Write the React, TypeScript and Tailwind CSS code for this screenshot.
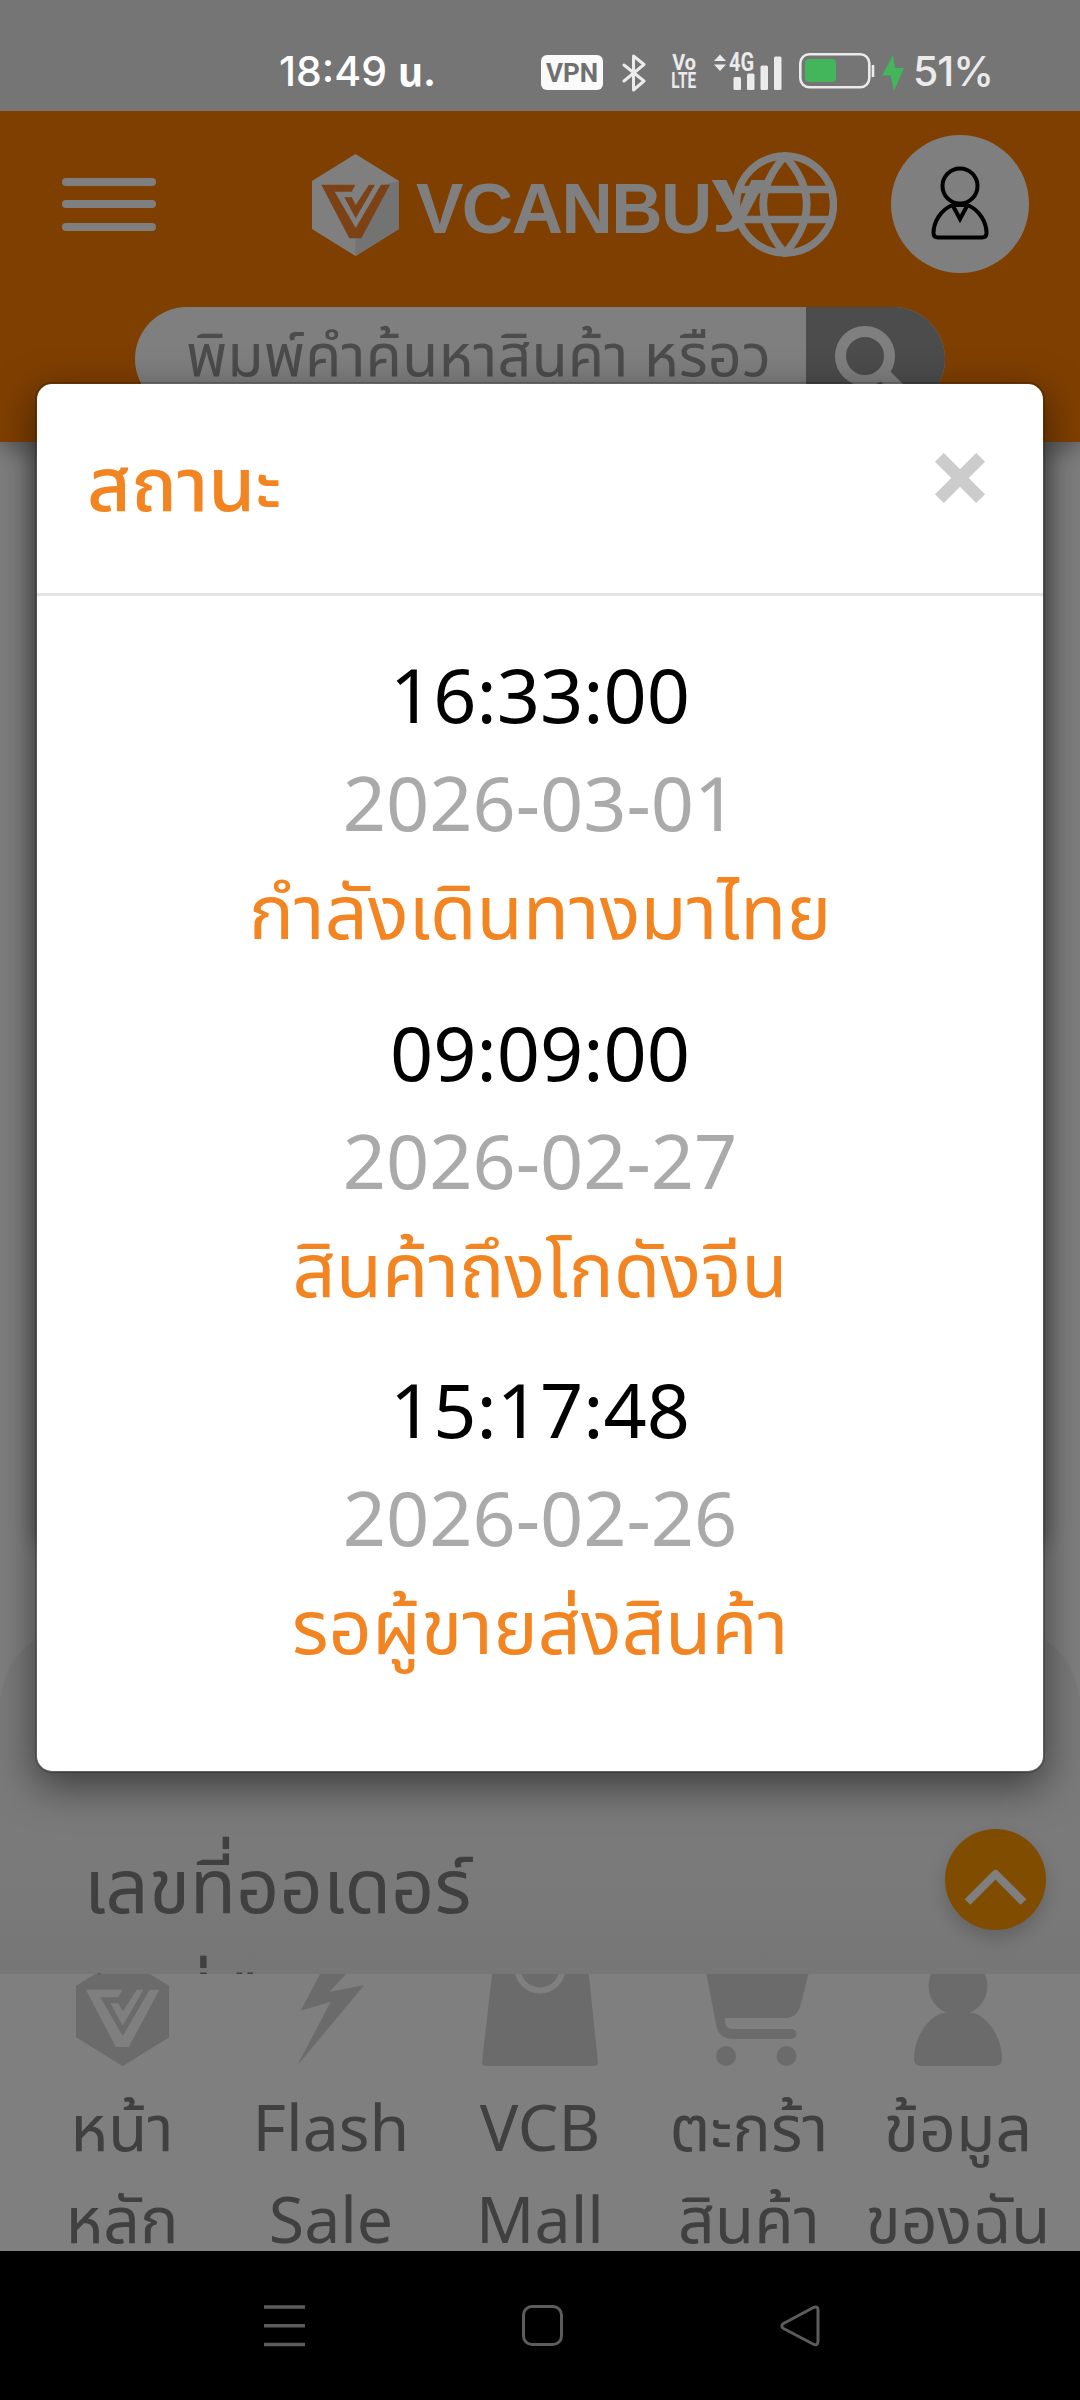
import type { ReactNode } from "react";

const timeline = [
  { time: "16:33:00", date: "2026-03-01", status: "กำลังเดินทางมาไทย" },
  { time: "09:09:00", date: "2026-02-27", status: "สินค้าถึงโกดังจีน" },
  { time: "15:17:48", date: "2026-02-26", status: "รอผู้ขายส่งสินค้า" },
];

function LogoMark({ className, fill, shade, mark }: { className: string; fill: string; shade: string; mark: string }) {
  return (
    <svg viewBox="0 0 87 102" preserveAspectRatio="none" className={className}>
      <path d="M43.5 0 87 27V75L43.5 102 0 75V27Z" fill={fill} />
      <path d="M87 27V75L43.5 102V74L72 30.7Z" fill={shade} />
      <path d="M9.3 30.7H43.3L39.7 37.7H22.7L43.7 74 69 30.7H78L49.3 84.3H37.3Z" fill={mark} />
      <path d="M32.3 43.3H39.7L43.7 51 57 30.7H63L43.7 64.3Z" fill={mark} />
    </svg>
  );
}

function StatusBar() {
  return (
    <div className="flex h-[111px] items-center bg-[#757575] pl-[279px] text-white">
      <div className="mt-[32px] w-[262px] whitespace-nowrap text-[41px] leading-none font-medium font-['Inter','Noto_Sans_Thai',sans-serif]">
        18:49 <span className="text-[39px] font-bold">น.</span>
      </div>
      <div className="mt-[34px] flex h-[35px] w-[62px] items-center justify-center rounded-md bg-[#fafafa] text-[26px] font-bold leading-none text-[#707070] font-['Roboto',sans-serif]">
        VPN
      </div>
      <svg viewBox="0 0 24 38" className="ml-[19px] mt-[34px] h-[38px] w-6" fill="none" stroke="#ebebeb" strokeWidth="3" strokeLinejoin="round" strokeLinecap="round">
        <path d="M2 11 22 27 11.5 36V2L22 10.5 2 27" />
      </svg>
      <div className="ml-[25px] mt-[33px] flex w-[26px] flex-col items-center text-[22px] font-bold leading-[18px] text-[#ebebeb] font-['Roboto',sans-serif]">
        <span className="scale-x-90">Vo</span>
        <span className="scale-x-70">LTE</span>
      </div>
      <div className="relative ml-[17px] mt-[32px] h-[38px] w-[68px]">
        <svg viewBox="0 0 68 38" className="h-[38px] w-[68px]" fill="#ebebeb">
          <path d="M0 8 6 1.5 12 8ZM0 11.500H12L6 18Z" />
          <rect x="19.500" y="24" width="7.500" height="13" rx="1.500" />
          <rect x="33" y="20.500" width="7.500" height="16.500" rx="1.500" />
          <rect x="46.500" y="12.500" width="7.500" height="24.500" rx="1.500" />
          <rect x="60" y="3.500" width="7.500" height="33.500" rx="1.500" />
        </svg>
        <span className="absolute left-[15px] top-0 origin-left scale-x-80 text-[25px] font-bold leading-[20px] text-[#ebebeb] font-['Roboto',sans-serif]">
          4G
        </span>
      </div>
      <svg viewBox="0 0 76 36" className="ml-[17px] mt-[31px] h-9 w-[76px]">
        <rect x="1.300" y="1.300" width="69" height="33" rx="9" fill="none" stroke="#ebebeb" strokeWidth="2.600" />
        <rect x="6" y="6" width="31" height="23" rx="4" fill="#43b55a" />
        <path d="M74 12V24" stroke="#ebebeb" strokeWidth="2.600" />
      </svg>
      <svg viewBox="0 0 22 36" className="ml-[7px] mt-[34px] h-9 w-[22px]" fill="#43b55a">
        <path d="M11 0 0 20.500H8.500L12 36 22 13H13Z" />
      </svg>
      <span className="ml-[9px] mt-[32px] text-[41px] font-medium leading-none text-[#ebebeb] font-['Inter',sans-serif] tracking-[-1px]">51%</span>
    </div>
  );
}

function Header() {
  return (
    <header className="relative z-10 h-[331px] bg-[#ff7f00] shadow-[0_8px_20px_rgba(0,0,0,0.3)]">
      <div className="flex items-center pt-6 pl-[62px]">
        <div className="flex w-[94px] flex-col gap-[14.500px]">
          <span className="h-2 rounded-full bg-white" />
          <span className="h-2 rounded-full bg-white" />
          <span className="h-2 rounded-full bg-white" />
        </div>
        <LogoMark className="mt-[2px] ml-[156px] h-[102px] w-[87px]" fill="#ffffff" shade="#e6e6e6" mark="#f9822a" />
        <div className="mt-[9px] ml-[17px] w-[317px] whitespace-nowrap text-[71px] leading-[70px] font-bold tracking-[-1.500px] text-white font-['Liberation_Sans',sans-serif]">
          VCANBU
          <span className="relative -top-[16px] inline-block origin-left scale-x-140">y</span>
        </div>
        <svg viewBox="0 0 104 105" className="relative h-[105px] w-[104px]" fill="none" stroke="#fff" strokeWidth="7.500">
          <circle cx="52" cy="52.500" r="48.500" />
          <path d="M52 4Q8.500 52.500 52 101Q95.500 52.500 52 4ZM8 37.500H96M8 67.500H96" />
        </svg>
        <div className="ml-[54px] flex size-[138px] items-center justify-center rounded-full bg-white">
          <svg viewBox="0 0 58 74" className="-mt-[2px] h-[74px] w-[58px]" fill="none" stroke="#000" strokeWidth="4">
            <circle cx="29" cy="20" r="17.500" />
            <path d="M21.500 39C9 44 2.500 57 2.500 67Q2.500 71.500 7 71.500H51Q55.500 71.500 55.500 67C55.500 57 49 44 36.500 39ZM21.500 39 29 53 36.500 39" />
          </svg>
        </div>
      </div>
      <div className="mx-[135px] mt-[34px] flex h-[104px] overflow-hidden rounded-full bg-white">
        <div className="w-[671px] whitespace-nowrap pl-[51px] text-[59.400px] leading-[92px] text-[#999]">
          พิมพ์คำค้นหาสินค้า หรือว
        </div>
        <div className="flex flex-1 bg-[#999] pt-[18px] pl-7">
          <svg viewBox="0 0 76 76" className="size-[76px]" fill="none" stroke="#fff" strokeWidth="11">
            <circle cx="31" cy="31" r="24.500" />
            <path d="M49 49 70 70" strokeWidth="14" />
          </svg>
        </div>
      </div>
    </header>
  );
}

function NavItem({ lines, children }: { lines: [string, string]; children: ReactNode }) {
  return (
    <div className="flex w-[209px] flex-col items-center">
      {children}
      <div className="mt-[14px] whitespace-nowrap text-center text-[64.400px] leading-[92px] text-[#808080]">
        {lines[0]}
        <br />
        {lines[1]}
      </div>
    </div>
  );
}

function BottomNav() {
  return (
    <nav className="relative flex h-[277px] items-start justify-center overflow-hidden bg-white">
      <div className="-mt-[17px] flex">
        <NavItem lines={["หน้า", "หลัก"]}>
          <LogoMark className="h-[109px] w-[93px] shrink-0" fill="#d7d7d7" shade="#d7d7d7" mark="#ffffff" />
        </NavItem>
        <NavItem lines={["Flash", "Sale"]}>
          <svg viewBox="0 0 80 109" className="h-[109px] w-20 shrink-0" fill="#d7d7d7">
            <path d="M38 0H71L38.300 35 73.300 28 6 109 39.700 44.700 9.700 53.700Z" />
          </svg>
        </NavItem>
        <NavItem lines={["VCB", "Mall"]}>
          <svg viewBox="0 0 116 109" className="h-[109px] w-[116px] shrink-0">
            <path d="M12 0H105L116 105Q116 109 112 109H4Q0 109 0 105Z" fill="#d7d7d7" />
            <circle cx="58" cy="11" r="22.500" fill="none" stroke="#fff" strokeWidth="6" />
          </svg>
        </NavItem>
        <NavItem lines={["ตะกร้า", "สินค้า"]}>
          <svg viewBox="0 0 120 109" className="h-[109px] w-[120px] shrink-0 overflow-visible" fill="#d7d7d7">
            <path d="M14 0H124L111 50Q107 61 98 61H36V65Q37 72 43 72H102.500A5 5 0 0 1 102.500 82H44Q29 82 27 67Z" />
            <circle cx="37" cy="99" r="10" />
            <circle cx="97.500" cy="99" r="10" />
          </svg>
        </NavItem>
        <NavItem lines={["ข้อมูล", "ของฉัน"]}>
          <svg viewBox="0 0 88 109" className="h-[109px] w-[88px] shrink-0" fill="#d7d7d7">
            <circle cx="44" cy="29" r="29.500" />
            <path d="M28 56H60C78 63 88 84 88 102Q88 109 81 109H7Q0 109 0 102C0 84 10 63 28 56Z" />
          </svg>
        </NavItem>
      </div>
    </nav>
  );
}

function SystemNav() {
  return (
    <div className="flex h-[149px] items-start bg-black pt-[54px] pl-[264px]">
      <svg viewBox="0 0 41 42" className="h-[42px] w-[41px]" stroke="#5c5c5c" strokeWidth="3.500">
        <path d="M0 2H41M0 20.700H41M0 39.500H41" />
      </svg>
      <div className="ml-[217px] size-[41px] rounded-[10px] border-3 border-[#5c5c5c]" />
      <svg viewBox="0 0 41 42" className="ml-[217px] h-[42px] w-[41px]" fill="none" stroke="#5c5c5c" strokeWidth="3" strokeLinejoin="round">
        <path d="M33 2.700Q38 .5 38 5V36Q38 41.500 33 39L3.500 23.500Q0 21 3.500 18.500Z" />
      </svg>
    </div>
  );
}

function StatusModal() {
  return (
    <div className="absolute top-[271px] left-[35px] h-[1391px] w-[1010px] rounded-[17px] border-2 border-black/20 bg-white bg-clip-padding shadow-[0_13px_40px_rgba(0,0,0,0.5)]">
      <div className="flex h-[212px] items-start justify-between border-b-3 border-[#e5e5e5] pt-[44px] pr-[58px] pl-[50px]">
        <h4 className="text-[75.600px] leading-[108px] font-medium text-[#f28522]">สถานะ</h4>
        <svg viewBox="0 0 50 50" className="mt-[25px] size-[50px]" stroke="#ccc" strokeWidth="12.500">
          <path d="M4.400 4.400 45.600 45.600M45.600 4.400 4.400 45.600" />
        </svg>
      </div>
      <div className="flex flex-col gap-[33.500px] pt-[44px] text-center text-[75.600px] leading-[108px]">
        {timeline.map((item) => (
          <div key={item.time}>
            <p className="text-black">{item.time}</p>
            <p className="text-[#aaa]">{item.date}</p>
            <p className="text-[#f28522]">{item.status}</p>
          </div>
        ))}
      </div>
    </div>
  );
}

export default function App() {
  return (
    <div className="h-[2400px] w-[1080px] overflow-hidden font-['Noto_Sans','Noto_Sans_Thai',sans-serif]">
      <StatusBar />
      <div className="relative h-[2140px] overflow-hidden bg-white">
        <Header />
        <main className="h-[1532px] overflow-hidden">
          <div className="mx-[37px] h-[1105px] rounded-b-2xl bg-white shadow-[0_0_22px_rgba(0,0,0,0.4)]" />
          <section className="mt-[79px] h-[348px] rounded-t-[80px] bg-linear-to-b from-[#f4f4f4] from-75% to-[#ececec] pt-[204px] pl-[84px] text-[75.600px] leading-[108px] text-[#808080]">
            <p>เลขที่ออเดอร์</p>
            <p className="mt-[11px]">วันที่คืน</p>
          </section>
        </main>
        <BottomNav />

        {/* back to top */}
        <div className="absolute top-[1718px] left-[945px] size-[101px] rounded-full bg-[#ff9900] shadow-[0_8px_18px_rgba(0,0,0,0.18)]">
          <svg viewBox="0 0 101 101" className="size-full" fill="none" stroke="#fff" strokeWidth="8" strokeLinejoin="round">
            <path d="M22.500 73 50.500 45 78.500 73" />
          </svg>
        </div>

        {/* backdrop + dialog */}
        <div className="absolute inset-0 z-20 bg-black/50">
          <StatusModal />
        </div>
      </div>
      <SystemNav />
    </div>
  );
}
